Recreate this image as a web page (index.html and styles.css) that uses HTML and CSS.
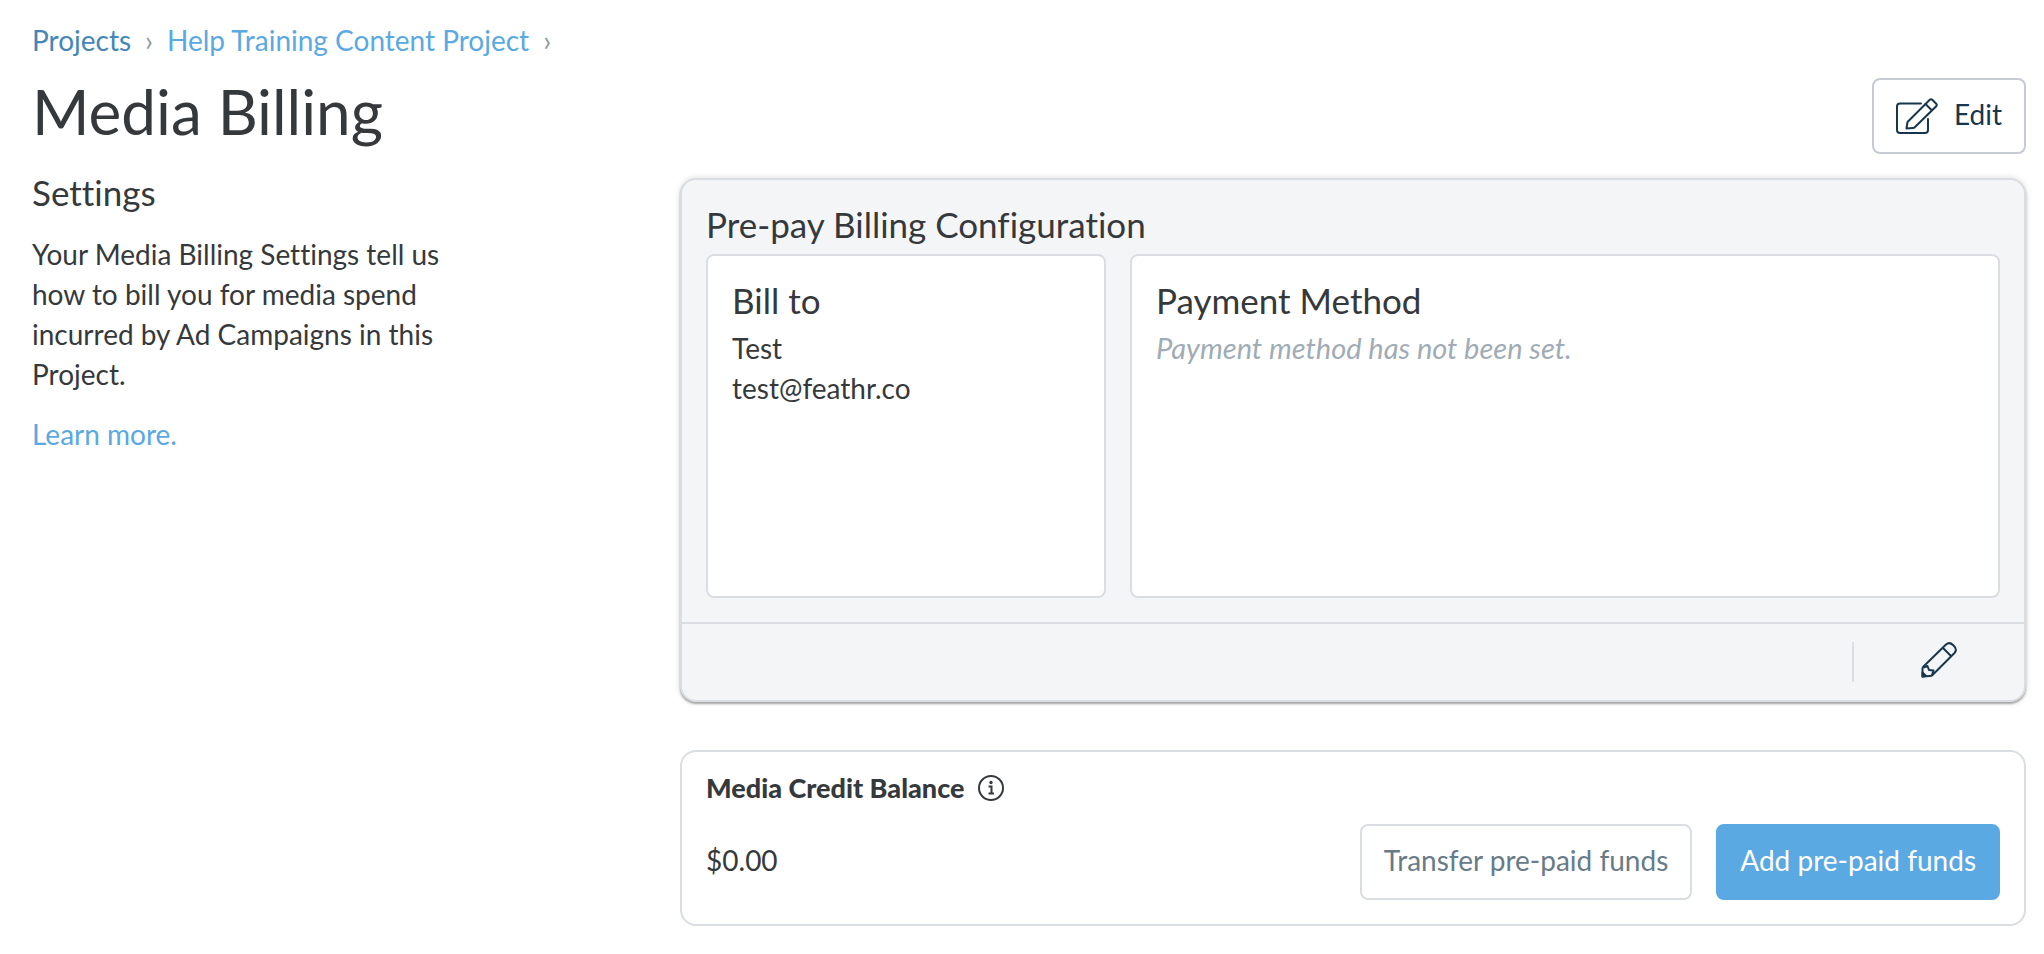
FILE: index.html
```html
<!DOCTYPE html>
<html lang="en">
<head>
  <meta charset="UTF-8" />
  <meta name="viewport" content="width=device-width, initial-scale=1" />
  <title>Media Billing</title>
  <link rel="stylesheet" href="styles.css">
</head>
<body>

<div class="page">

  <nav class="breadcrumbs" aria-label="Breadcrumbs">
    <a class="root" href="#">Projects</a>
    <span class="separator">›</span>
    <a href="#">Help Training Content Project</a>
    <span class="separator">›</span>
  </nav>

  <header class="page-header">
    <h1>Media Billing</h1>
    <button class="btn btn-edit" type="button">
      <svg width="42" height="36" viewBox="0 0 42 36" fill="none" stroke="currentColor" stroke-width="2" stroke-linejoin="round" stroke-linecap="round" aria-hidden="true">
        <path d="M25 5.500H4a3 3 0 0 0-3 3V32a3 3 0 0 0 3 3h25a3 3 0 0 0 3-3V21" />
        <path d="M10.500 30.500l1-6.500L33.500 2q1.500-1.500 3 0l3.500 3.500q1.500 1.500 0 3L18.500 29.500q-.5.500-1.500.5z" />
        <path d="M29.500 6l6 6" />
      </svg>
      Edit
    </button>
  </header>

  <div class="columns">

    <aside class="settings">
      <h2>Settings</h2>
      <p>Your Media Billing Settings tell us how to bill you for media spend incurred by Ad Campaigns in this Project.</p>
      <p><a href="#">Learn more.</a></p>
    </aside>

    <main class="content">

      <!-- Billing configuration -->
      <section class="card config">
        <div class="config-body">
          <h2>Pre-pay Billing Configuration</h2>
          <div class="boxes">
            <div class="box">
              <h3>Bill to</h3>
              <div>Test</div>
              <div>test@feathr.co</div>
            </div>
            <div class="box">
              <h3>Payment Method</h3>
              <div class="empty">Payment method has not been set.</div>
            </div>
          </div>
        </div>
        <div class="config-actions">
          <button class="icon-button" type="button" aria-label="Edit configuration">
            <svg width="36" height="36" viewBox="0 0 36 36" fill="none" stroke="currentColor" stroke-width="2" stroke-linejoin="round" aria-hidden="true">
              <path d="M1.500 34.500V27q0-1.500 1-2.500L25 2.500q3.500-3 7 .5l1 1q3.500 3.500 .5 7L11.500 33q-1 1-2.500 1z" />
              <path d="M22 6l8 8M2.500 25.500l4-1.500 1.500 4 4.500.500-1.500 4.500" />
              <path d="M1.500 34.500v-4l3.500 3.500z" fill="currentColor" />
            </svg>
          </button>
        </div>
      </section>

      <!-- Credit balance -->
      <section class="card balance">
        <h4>
          Media Credit Balance
          <svg width="26" height="26" viewBox="0 0 26 26" aria-hidden="true">
            <circle cx="13" cy="13" r="12" fill="none" stroke="currentColor" stroke-width="2" />
            <circle cx="13" cy="7.500" r="1.700" fill="currentColor" />
            <path d="M10.500 11.500H13.500V18.500M10.500 18.500h5.500" fill="none" stroke="currentColor" stroke-width="2" />
          </svg>
        </h4>
        <div class="balance-row">
          <span class="amount">$0.00</span>
          <button class="btn btn-secondary" type="button">Transfer pre-paid funds</button>
          <button class="btn btn-primary" type="button">Add pre-paid funds</button>
        </div>
      </section>

    </main>
  </div>

</div>

</body>
</html>
```
FILE: styles.css
```css
* {
  box-sizing: border-box;
}
body {
  margin: 0;
  font-family: Lato, "Open Sans", sans-serif;
  font-size: 28px;
  line-height: 40px;
  font-variant-ligatures: none;
  color: #36393c;
  background: #fff;
}
h1, h2, h3, h4, p {
  margin: 0;
}
a {
  color: #5aa9e2;
  text-decoration: none;
}
a:hover {
  text-decoration: underline;
}
h1 {
  font-size: 62px;
  font-weight: 400;
  line-height: 66px;
}
h2, h3 {
  font-size: 35px;
  font-weight: 400;
  line-height: 44px;
}
h3 {
  margin-bottom: 6px;
}
h4 {
  display: flex;
  align-items: center;
  gap: 14px;
  font-size: 27px;
  font-weight: 900;
}
.page {
  padding: 20px 18px 28px 32px;
}
.breadcrumbs {
  display: flex;
  gap: 14px;
}
.breadcrumbs .root {
  color: #4486b8;
}
.separator {
  color: #8f9ba5;
}
.page-header {
  display: flex;
  justify-content: space-between;
  margin: 18px 0 24px;
}
.btn {
  display: flex;
  align-items: center;
  justify-content: center;
  gap: 16px;
  height: 76px;
  padding: 0 22px 4px;
  border: 2px solid #dadde2;
  border-radius: 8px;
  background: #fff;
  font: inherit;
  cursor: pointer;
}
.btn svg {
  margin-top: 4px;
}
.btn-edit {
  border-color: #c6cad2;
  color: #17364d;
}
.btn-secondary {
  color: #687b88;
}
.btn-primary {
  border-color: #5aa9e2;
  background: #5aa9e2;
  color: #fff;
}
.columns {
  display: flex;
}
.settings {
  width: 32.5%;
  padding-right: 200px;
}
.settings h2, .settings p {
  margin-bottom: 20px;
}
.settings h2 {
  margin-top: -8px;
}
.content {
  flex: 1;
}
.card {
  border: 2px solid #dadde2;
  border-radius: 16px;
}
.config {
  margin-bottom: 48px;
  background: #f4f5f7;
  box-shadow: 0 2px 2px rgba(0, 0, 0, 0.3), 0 0 6px rgba(0, 0, 0, 0.15);
}
.config-body {
  padding: 22px 24px 24px;
}
.boxes {
  display: grid;
  grid-template-columns: 40fr 87fr;
  gap: 24px;
  margin-top: 8px;
}
.box {
  min-height: 344px;
  padding: 22px 24px;
  border: 2px solid #dadde2;
  border-radius: 8px;
  background: #fff;
}
.empty {
  color: #a0acb5;
  font-size: 29px;
  font-style: italic;
}
.config-actions {
  display: flex;
  justify-content: flex-end;
  padding: 18px 0;
  border-top: 2px solid #dadde2;
}
.icon-button {
  width: 172px;
  height: 40px;
  padding: 0 0 4px;
  border: none;
  border-left: 2px solid #dadde2;
  background: none;
  color: #17364d;
  cursor: pointer;
}
.icon-button svg {
  display: block;
  margin: 0 auto;
}
.balance {
  padding: 16px 24px 24px;
}
.balance-row {
  display: flex;
  align-items: center;
  gap: 24px;
  margin-top: 16px;
}
.amount {
  flex: 1;
  padding-bottom: 4px;
}
```
